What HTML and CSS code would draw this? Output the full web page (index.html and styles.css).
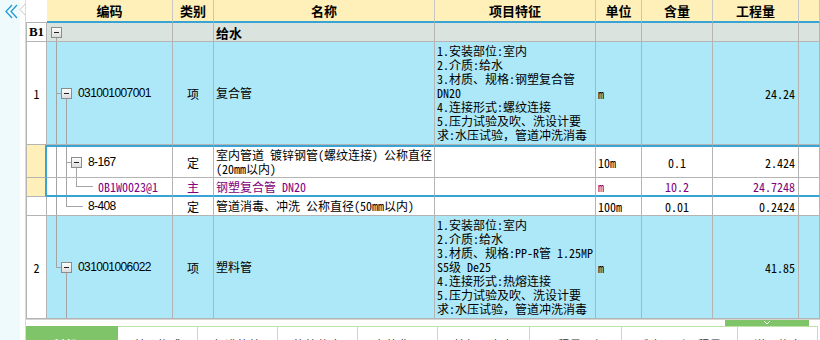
FILE: index.html
```html
<!DOCTYPE html>
<html>
  <head>
    <meta charset="utf-8">
    <link rel="stylesheet" href="styles.css">
  </head>
  <body>
    <div class="app">
      <aside class="side">
        <svg width="20" height="24" viewBox="0 0 20 24">
          <path d="M12 5 L6 11.5 L12 18 M17 5 L11 11.5 L17 18" fill="none" stroke="#1f9bd7" stroke-width="1.3" />
        </svg>
      </aside>
      <div class="notch">
        <svg width="7" height="20" viewBox="0 0 7 20">
          <polyline points="7,3 1,9.5 7,16" fill="#fff" stroke="#c6c6c6" stroke-width="1" />
        </svg>
      </div>

      <main class="main">
        <div class="grid">
          <div class="row hd">
            <div class="c num"></div>
            <div class="c">编码</div>
            <div class="c">类别</div>
            <div class="c">名称</div>
            <div class="c">项目特征</div>
            <div class="c">单位</div>
            <div class="c">含量</div>
            <div class="c">工程量</div>
            <div class="c"></div>
          </div>

          <div class="row grp">
            <div class="c num">B1</div>
            <div class="c code"><span class="node open"><i class="box"></i></span></div>
            <div class="c kind"></div>
            <div class="c name"><b>给水</b></div>
            <div class="c feat"></div>
            <div class="c unit"></div>
            <div class="c qty"></div>
            <div class="c amt"></div>
            <div class="c"></div>
          </div>

          <div class="row item">
            <div class="c num">1</div>
            <div class="c code">
              <span class="g tee"></span><span class="node open"><i class="box"></i></span><span class="cd">031001007001</span>
            </div>
            <div class="c kind">项</div>
            <div class="c name"><span>复合管</span></div>
            <div class="c feat">
              <span>1.安装部位:室内<br>2.介质:给水<br>3.材质、规格:钢塑复合管<br>DN20<br>4.连接形式:螺纹连接<br>5.压力试验及吹、洗设计要<br>求:水压试验，管道冲洗消毒</span>
            </div>
            <div class="c unit">m</div>
            <div class="c qty"></div>
            <div class="c amt">24.24</div>
            <div class="c"></div>
          </div>

          <div class="row sel sel-top">
            <div class="c num"></div>
            <div class="c code">
              <span class="g pipe"></span><span class="g tee"></span><span class="node open"><i class="box"></i></span><span class="cd">8-167</span>
            </div>
            <div class="c kind">定</div>
            <div class="c name"><span>室内管道 镀锌钢管(螺纹连接) 公称直径<br>(20mm以内)</span></div>
            <div class="c feat"></div>
            <div class="c unit">10m</div>
            <div class="c qty">0.1</div>
            <div class="c amt">2.424</div>
            <div class="c"></div>
          </div>

          <div class="row sel sel-bot part">
            <div class="c num"></div>
            <div class="c code">
              <span class="g pipe"></span><span class="g pipe"></span><span class="g end"></span><span class="leaf"></span><span class="cd mono">0B1W0023@1</span>
            </div>
            <div class="c kind">主</div>
            <div class="c name"><span>钢塑复合管 DN20</span></div>
            <div class="c feat"></div>
            <div class="c unit">m</div>
            <div class="c qty">10.2</div>
            <div class="c amt">24.7248</div>
            <div class="c"></div>
          </div>

          <div class="row sub">
            <div class="c num"></div>
            <div class="c code">
              <span class="g pipe"></span><span class="g end"></span><span class="leaf"></span><span class="cd">8-408</span>
            </div>
            <div class="c kind">定</div>
            <div class="c name"><span>管道消毒、冲洗 公称直径(50mm以内)</span></div>
            <div class="c feat"></div>
            <div class="c unit">100m</div>
            <div class="c qty">0.01</div>
            <div class="c amt">0.2424</div>
            <div class="c"></div>
          </div>

          <div class="row item">
            <div class="c num">2</div>
            <div class="c code">
              <span class="g end"></span><span class="node open"><i class="box"></i></span><span class="cd">031001006022</span>
            </div>
            <div class="c kind">项</div>
            <div class="c name"><span>塑料管</span></div>
            <div class="c feat">
              <span>1.安装部位:室内<br>2.介质:给水<br>3.材质、规格:PP-R管 1.25MP<br>S5级 De25<br>4.连接形式:热熔连接<br>5.压力试验及吹、洗设计要<br>求:水压试验，管道冲洗消毒</span>
            </div>
            <div class="c unit">m</div>
            <div class="c qty"></div>
            <div class="c amt">41.85</div>
            <div class="c"></div>
          </div>
        </div>

        <div class="strip">
          <div class="handle">
            <svg width="10" height="6" viewBox="0 0 10 6">
              <path d="M2 1 L5 4 L8 1" fill="none" stroke="#fff" stroke-width="1" />
            </svg>
          </div>
        </div>

        <nav class="tabs">
          <span class="tab on">工料机显示</span>
          <span class="tab">单价构成</span>
          <span class="tab">标准换算</span>
          <span class="tab">换算信息</span>
          <span class="tab">安装费用</span>
          <span class="tab">特征及内容</span>
          <span class="tab">工程量明细</span>
          <span class="tab">反查图形工程量</span>
          <span class="tab">说明信息</span>
        </nav>
      </main>
    </div>
  </body>
</html>
```

FILE: styles.css
```css
body {
  margin: 0;
  width: 820px;
  height: 340px;
  overflow: hidden;
  font-family: "Noto Sans Mono CJK SC", "Noto Sans CJK SC", sans-serif;
  font-size: 12px;
  color: #000;
  background: #fff;
}

.app {
  display: flex;
  height: 340px;
}

.side {
  width: 20px;
  flex: none;
  background: #effafd;
}

.side svg,
.notch svg {
  display: block;
}

.notch {
  width: 5px;
  flex: none;
}

.notch svg {
  margin-left: -1px;
}

.main {
  flex: 1;
  min-width: 0;
  border-left: 1px solid #dadada;
  display: flex;
  flex-direction: column;
}

/* grid */
.grid {
  display: grid;
  grid-template-columns: 21px 126px 41px 221px 161px 46px 71px 86px 1fr;
  grid-template-rows: 23px 19px 103px 33px 19px 19px 103px;
  border-bottom: 1px solid #d4d4d4;
}

.row {
  display: contents;
}

.c {
  box-sizing: border-box;
  display: flex;
  align-items: center;
  padding: 0 2px;
  border-right: 1px solid #b4b4b4;
  border-bottom: 1px solid #b4b4b4;
  white-space: nowrap;
  overflow: hidden;
}

.num {
  justify-content: center;
  border-left: 1px solid #b4b4b4;
}

.kind,
.qty {
  justify-content: center;
}

.amt {
  justify-content: flex-end;
  padding-right: 3px;
}

.name span,
.feat span {
  line-height: 14px;
}

.name b {
  font-weight: bold;
  font-size: 13px;
}

/* row kinds */
.hd .c {
  background: #ffefb9;
  font-weight: bold;
  font-size: 13px;
  justify-content: center;
  border-right-color: #c6c6c6;
  border-bottom: 2px solid #39a3d5;
}

.hd .num {
  background: #fff;
  border-left: 0;
  border-right: 0;
  border-bottom: 1px solid #b4b4b4;
}

.grp .c {
  background: #dbe3df;
}

.item .c {
  background: #ade8f9;
}

.sel .c,
.sub .c {
  background: #fff;
}

.row .num {
  background: #fff;
}

.grp .num {
  font: bold 13px "Liberation Serif", serif;
}

.sel .num {
  background: #ffefb9;
  border-right: 2px solid #39a3d5;
}

.sel-top .c:not(.num) {
  border-top: 2px solid #39a3d5;
}

.sel-bot .c:not(.num) {
  border-bottom: 2px solid #39a3d5;
}

.part .c {
  color: #800080;
}

/* tree */
.code {
  align-items: stretch;
  padding: 0 0 0 4px;
}

.cd {
  align-self: center;
  margin-left: 6px;
  font-family: "Liberation Sans", sans-serif;
  letter-spacing: -0.6px;
}

.cd.mono {
  font-family: inherit;
  letter-spacing: 0;
}

.leaf + .cd {
  margin-left: 5px;
}

.g {
  width: 10px;
  flex: none;
  background-repeat: no-repeat;
}

.g.pipe {
  background-image: linear-gradient(#a4a4a4, #a4a4a4);
  background-size: 1px 100%;
  background-position: 5px 0;
}

.g.tee {
  background-image: linear-gradient(#a4a4a4, #a4a4a4), linear-gradient(#a4a4a4, #a4a4a4);
  background-size: 1px 100%, 5px 1px;
  background-position: 5px 0, 5px 50%;
}

.g.end {
  background-image: linear-gradient(#a4a4a4, #a4a4a4), linear-gradient(#a4a4a4, #a4a4a4);
  background-size: 1px 50%, 5px 1px;
  background-position: 5px 0, 5px 50%;
}

.leaf {
  width: 12px;
  flex: none;
  background: linear-gradient(#a4a4a4, #a4a4a4) no-repeat 0 50% / 100% 1px;
}

.node {
  width: 11px;
  flex: none;
  display: flex;
  flex-direction: column;
  align-items: center;
}

.node::before,
.node::after {
  content: "";
  flex: 1;
}

.node.open::after {
  width: 1px;
  background: #a4a4a4;
}

.box {
  box-sizing: border-box;
  width: 11px;
  height: 11px;
  border: 1px solid #8c8c8c;
  background: linear-gradient(#fdfdfd, #dcdcdc);
}

.box::before {
  content: "";
  display: block;
  height: 1px;
  margin: 4px 2px 0;
  background: #222;
}

/* bottom */
.strip {
  height: 9px;
  display: flex;
  justify-content: flex-end;
  padding-right: 11px;
}

.handle {
  width: 84px;
  height: 6px;
  background: #80c469;
  display: flex;
  justify-content: center;
}

.handle svg {
  display: block;
}

.tabs {
  display: flex;
}

.tab {
  flex: none;
  height: 30px;
  padding: 10px 15.5px 0;
  line-height: 16px;
  box-sizing: border-box;
  border: 1px solid #bde4a8;
  border-left: 0;
  color: #333;
  background: #fff;
}

.tab.on {
  background: #80c469;
  border-color: #80c469;
  color: #fff;
  font-weight: bold;
}
```
